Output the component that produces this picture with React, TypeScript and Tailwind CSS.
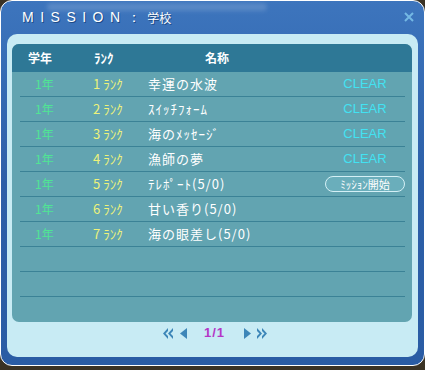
const missions = [
  { year: '1年', rank: 1, name: '幸運の水波', status: 'clear' },
  { year: '1年', rank: 2, name: 'ｽｲｯﾁﾌｫｰﾑ', status: 'clear' },
  { year: '1年', rank: 3, name: '海のﾒｯｾｰｼﾞ', status: 'clear' },
  { year: '1年', rank: 4, name: '漁師の夢', status: 'clear' },
  { year: '1年', rank: 5, name: 'ﾃﾚﾎﾟｰﾄ(5/0)', status: 'start' },
  { year: '1年', rank: 6, name: '甘い香り(5/0)', status: 'none' },
  { year: '1年', rank: 7, name: '海の眼差し(5/0)', status: 'none' },
];

const font = { fontFamily: '"MS Gothic", "Noto Sans CJK JP", "Liberation Sans", sans-serif' };

function DoubleArrow({ right = false }: { right?: boolean }) {
  return (
    <svg width="12" height="11" viewBox="0 0 12 11" className={right ? '' : 'rotate-180'}>
      <path d="M1 0 L6 5.5 L1 11 L1 8 L3.5 5.5 L1 3 Z" fill="#3d86b8" />
      <path d="M6 0 L11 5.5 L6 11 L6 8 L8.5 5.5 L6 3 Z" fill="#3d86b8" />
    </svg>
  );
}

function Arrow({ right = false }: { right?: boolean }) {
  return (
    <svg width="7" height="11" viewBox="0 0 7 11" className={right ? '' : 'rotate-180'}>
      <path d="M0 0 L7 5.5 L0 11 Z" fill="#3d86b8" />
    </svg>
  );
}

export default function App() {
  const rows = [...missions, null, null, null];

  return (
    <div className="w-[425px] h-[370px] bg-[#3a3224] overflow-hidden" style={font}>
      <div className="h-[366px] rounded-[12px] border border-white bg-gradient-to-b from-[#3d75bd] via-[#2c5fa8] to-[#2a5ca4] flex flex-col pl-[6px] pr-[6px] pb-[8px]">
        {/* Title bar */}
        <div className="h-[33px] flex items-center pl-[15px] pr-[3px] relative">
          <div className="absolute left-[40px] top-[2px] w-[220px] h-[8px] rounded-full bg-white/15 blur-[2px]" />
          <span
            className="text-[14px] text-white tracking-[6.5px]"
            style={{ fontFamily: '"Liberation Sans", sans-serif', textShadow: '1px 1px 0 #1d4a86' }}
          >
            MISSION：
          </span>
          <span className="text-[12px] text-white" style={{ textShadow: '1px 1px 0 #1d4a86' }}>
            学校
          </span>
          <svg width="10" height="10" viewBox="0 0 10 10" className="ml-auto mr-[1px] -mt-[1px]">
            <path d="M1 1 L9 9 M9 1 L1 9" stroke="#74b8e4" strokeWidth="2" />
          </svg>
        </div>

        {/* Light panel */}
        <div className="flex-1 rounded-[10px] bg-[#c8ebf4] pt-[10px] pl-[5px] pr-[6px] flex flex-col">
          <div className="h-[278px] rounded-[7px] bg-[#62a4b1] overflow-hidden">
            {/* Header */}
            <div className="h-[28px] bg-[#2e7896] flex items-center text-white font-bold text-[12px]">
              <span className="pl-[16px] w-[82px]">学年</span>
              <span className="w-[111px] text-[13px]">ﾗﾝｸ</span>
              <span>名称</span>
            </div>

            {rows.map((m, i) => (
              <div
                key={i}
                className={`h-[25px] ml-[8px] mr-[7px] flex items-center ${i < rows.length - 1 ? 'border-b border-[#3b8296]' : ''}`}
              >
                {m && (
                  <>
                    <span className="w-[73px] pl-[15px] text-[12px] text-[#50e494]">{m.year}</span>
                    <span className="w-[55px] text-[13px] text-[#eef27a]">
                      {m.rank} ﾗﾝｸ
                    </span>
                    <span className="flex-1 text-[13px] text-white tracking-[1px]">{m.name}</span>
                    <span className="w-[80px] flex justify-center">
                      {m.status === 'clear' && (
                        <span
                          className="text-[13px] text-[#42e2f2]"
                          style={{ fontFamily: '"Liberation Sans", sans-serif' }}
                        >
                          CLEAR
                        </span>
                      )}
                      {m.status === 'start' && (
                        <span className="w-[80px] h-[16px] rounded-full border border-[#d4f0f6] bg-[#6aaebb] text-white text-[11px] flex items-center justify-center">
                          ﾐｯｼｮﾝ開始
                        </span>
                      )}
                    </span>
                  </>
                )}
              </div>
            ))}
          </div>

          {/* Pagination */}
          <div className="h-[22px] flex items-center pl-[150px]">
            <DoubleArrow />
            <span className="ml-[6px]"><Arrow /></span>
            <span
              className="ml-[17px] w-[26px] text-[13px] font-bold text-[#b436c6] tracking-[1px]"
              style={{ fontFamily: '"Liberation Sans", sans-serif' }}
            >
              1/1
            </span>
            <span className="ml-[14px]"><Arrow right /></span>
            <span className="ml-[5px]"><DoubleArrow right /></span>
          </div>
        </div>
      </div>
    </div>
  );
}
